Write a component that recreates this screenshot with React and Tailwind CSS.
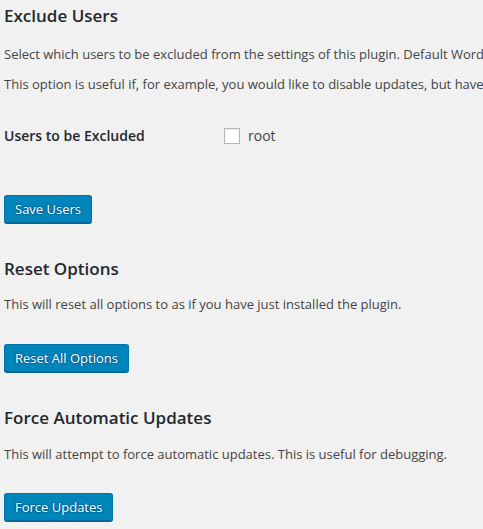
import React from "react";

const font = { fontFamily: '"Open Sans", "Noto Sans", sans-serif' };

function Button({ children }) {
  return (
    <button
      type="button"
      className="h-[28px] rounded-[3px] border border-[#0073aa] border-b-[#006799] bg-[#0085ba] px-[10px] pb-[1px] text-[13px] leading-[26px] text-white shadow-[0_1px_0_#006799] [text-shadow:0_-1px_1px_#006799,1px_0_1px_#006799,0_1px_1px_#006799,-1px_0_1px_#006799]"
    >
      {children}
    </button>
  );
}

export default function App() {
  return (
    <div className="min-h-screen w-[483px] overflow-hidden bg-[#f1f1f1] text-[#444]" style={font}>
      <div className="w-[1000px] whitespace-nowrap pl-[4px]">
        {/* Exclude Users */}
        <h2 className="pt-[4px] text-[17px] font-semibold leading-[24px] text-[#23282d]">
          Exclude Users
        </h2>
        <p className="mt-[16px] text-[13px] leading-[20px]">
          Select which users to be excluded from the settings of this plugin. Default WordPress behavior will be used for them.
        </p>
        <p className="mt-[10px] text-[13px] leading-[20px]">
          This option is useful if, for example, you would like to disable updates, but have them enabled for a specific user.
        </p>

        <div className="mt-[32px] flex items-center">
          <div className="w-[220px] text-[14px] font-semibold leading-[20px] text-[#23282d]">
            Users to be Excluded
          </div>
          <label className="flex items-center">
            <span className="block h-[16px] w-[16px] border border-[#b4b9be] bg-white shadow-[inset_0_1px_2px_rgba(0,0,0,0.1)]" />
            <span className="ml-[8px] text-[14px] leading-[20px]">root</span>
          </label>
        </div>

        <div className="mt-[49px]">
          <Button>Save Users</Button>
        </div>

        {/* Reset Options */}
        <h2 className="mt-[34px] text-[17px] font-semibold leading-[24px] text-[#23282d]">
          Reset Options
        </h2>
        <p className="mt-[13px] text-[13px] leading-[20px]">
          This will reset all options to as if you have just installed the plugin.
        </p>
        <div className="mt-[30px]">
          <Button>Reset All Options</Button>
        </div>

        {/* Force Automatic Updates */}
        <h2 className="mt-[34px] text-[17px] font-semibold leading-[24px] text-[#23282d]">
          Force Automatic Updates
        </h2>
        <p className="mt-[14px] text-[13px] leading-[20px]">
          This will attempt to force automatic updates. This is useful for debugging.
        </p>
        <div className="mt-[29px]">
          <Button>Force Updates</Button>
        </div>
      </div>
    </div>
  );
}
